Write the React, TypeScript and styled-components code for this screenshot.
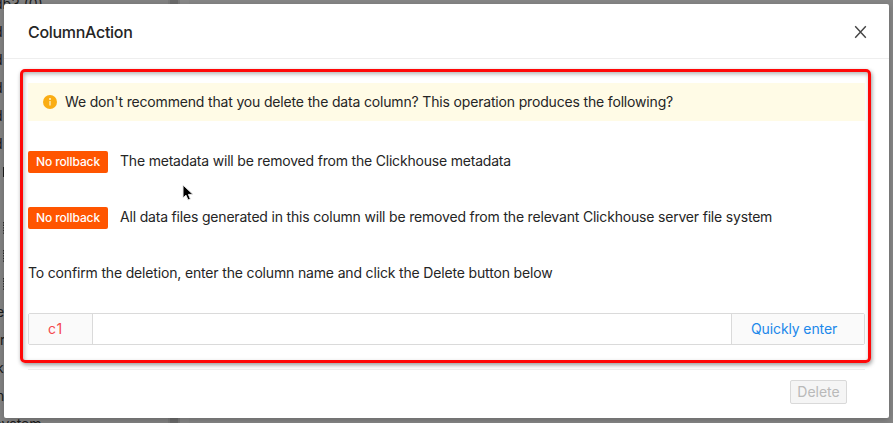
import React from "react";
import styled, { createGlobalStyle } from "styled-components";

const GlobalStyle = createGlobalStyle`
  * { box-sizing: border-box; }
  body { margin: 0; overflow: hidden; }
  button, input { font: inherit; }
`;

const Screen = styled.div`
  position: relative;
  width: 893px;
  height: 423px;
  overflow: hidden;
  font-family: Inter, "Liberation Sans", sans-serif;
  font-size: 14px;
  color: #252525;
  background: #858585;
  -webkit-font-smoothing: antialiased;
`;

const Workspace = styled.div`
  display: flex;
  height: 100%;
`;

const Sidebar = styled.div`
  width: 168px;
  flex: none;
  margin-top: -10px;
  background: #838383;
`;

const TreeRow = styled.div<{ $shift: number }>`
  height: 28px;
  line-height: 28px;
  white-space: nowrap;
  color: #1b1b1b;
  margin-left: ${(p) => p.$shift}px;
  display: flex;
  align-items: center;
`;

const Splitter = styled.div`
  width: 12px;
  border: solid #7b7b7b;
  border-width: 0 2px;
  background: #6b6b6b;
  flex: none;
`;

const Canvas = styled.div`
  flex: 1;
  border-left: 9px solid #898989;
  background: #868686;
`;

const Modal = styled.section`
  position: absolute;
  left: 4px;
  top: 4px;
  width: 885px;
  height: 414px;
  background: #fff;
  border-radius: 2px;
  box-shadow: 0 2px 7px rgba(0, 0, 0, 0.22);
`;

const Header = styled.header`
  height: 55px;
  display: flex;
  align-items: center;
  justify-content: space-between;
  padding: 2px 22px 0 24px;
  border-bottom: 1px solid #eeeeee;
`;

const Title = styled.h1`
  margin: 0;
  font-size: 16px;
  font-weight: 500;
  line-height: 22px;
  letter-spacing: -0.3px;
`;

const CloseButton = styled.button`
  display: flex;
  padding: 0;
  border: 0;
  background: none;
  color: #444;
`;

const Highlight = styled.div`
  margin: 10px 18px 0 16px;
  height: 294px;
  padding: 11px 3px 0 5px;
  border: 3px solid #ff0808;
  border-radius: 5px;
  box-shadow: 1px 2px 4px rgba(0, 0, 0, 0.4), inset 1px 2px 4px rgba(0, 0, 0, 0.3);
`;

const Banner = styled.div`
  height: 38px;
  display: flex;
  align-items: center;
  gap: 8px;
  padding-left: 15px;
  background: #fffbe6;
`;

const Line = styled.div<{ $top: number }>`
  height: 22px;
  margin-top: ${(p) => p.$top}px;
  display: flex;
  align-items: center;
  gap: 12px;
`;

const Copy = styled.span<{ $track: number }>`
  line-height: 22px;
  white-space: nowrap;
  letter-spacing: ${(p) => p.$track}px;
`;

const RowCopy = styled(Copy)`
  height: 22px;
  line-height: 20px;
`;

const Tag = styled.span`
  width: 80px;
  height: 22px;
  border-radius: 2px;
  background: #ff5500;
  color: #fff;
  font-size: 12px;
  font-weight: 500;
  line-height: 22px;
  text-align: center;
  letter-spacing: -0.1px;
`;

const InputGroup = styled.div`
  height: 32px;
  margin-top: 28px;
  display: flex;
  border: 1px solid #dadada;
  border-radius: 2px;
`;

const Addon = styled.span`
  width: 63px;
  padding-left: 19px;
  line-height: 30px;
  background: #fafafa;
  color: #f5494d;
  letter-spacing: 1px;
`;

const NameInput = styled.input`
  flex: 1;
  min-width: 0;
  border: 0;
  border-left: 1px solid #dadada;
  border-right: 1px solid #dadada;
  background: #fff;
  outline: none;
`;

const QuickButton = styled.button`
  width: 132px;
  padding: 0 0 0 19px;
  border: 0;
  background: #fafafa;
  color: #2088ea;
  text-align: left;
  line-height: 30px;
  letter-spacing: -0.12px;
`;

const Footer = styled.footer`
  margin: 6px 24px 0;
  padding: 10px 18px 0 0;
  border-top: 1px solid #eeeeee;
  display: flex;
  justify-content: flex-end;
`;

const DeleteButton = styled.button`
  width: 57px;
  height: 24px;
  padding: 0;
  border: 1px solid #d9d9d9;
  border-radius: 2px;
  background: #f5f5f5;
  color: #b9b9b9;
  line-height: 22px;
`;

const Pointer = styled.svg`
  position: absolute;
  left: 182px;
  top: 184px;
`;

const GridIcon = () => (
  <svg width="10" height="12" viewBox="0 0 10 12" stroke="#2b2b2b" strokeWidth="1.2" strokeDasharray="1.4 1.2">
    <path d="M0.6 0v12M4.6 0v12M8.6 0v12" />
  </svg>
);

const LeafIcon = () => (
  <svg width="10" height="10" viewBox="0 0 10 10" fill="none" stroke="#1b1b1b" strokeWidth="1.2">
    <rect x="0.6" y="0.6" width="8.8" height="8.8" />
  </svg>
);

const treeRows: { label: React.ReactNode; shift: number }[] = [
  { label: "db3 (0)", shift: -6 },
  { label: "d", shift: -6 },
  { label: "d", shift: -6 },
  { label: "d", shift: -6 },
  { label: "d", shift: -6 },
  { label: "d", shift: -6 },
  { label: <LeafIcon />, shift: 3 },
  { label: "", shift: 0 },
  { label: <GridIcon />, shift: 3 },
  { label: <GridIcon />, shift: 3 },
  { label: <GridIcon />, shift: 3 },
  { label: "e", shift: -4 },
  { label: "r", shift: 0 },
  { label: "k", shift: -4 },
  { label: "n", shift: -4 },
  { label: "system", shift: -6 },
];

export default function App() {
  return (
    <Screen>
      <GlobalStyle />
      <Workspace>
        <Sidebar>
          {treeRows.map((row, i) => (
            <TreeRow key={i} $shift={row.shift}>{row.label}</TreeRow>
          ))}
        </Sidebar>
        <Splitter />
        <Canvas />
      </Workspace>
      <Modal>
        <Header>
          <Title>ColumnAction</Title>
          <CloseButton aria-label="Close">
            <svg width="13" height="14" viewBox="0 0 13 14" fill="none" stroke="currentColor" strokeWidth="1.4">
              <path d="M1.2 1.2 11.8 12.8M11.8 1.2 1.2 12.8" />
            </svg>
          </CloseButton>
        </Header>
        <Highlight>
          <Banner>
            <svg width="14" height="14" viewBox="0 0 14 14">
              <circle cx="7" cy="7" r="7" fill="#faad14" />
              <circle cx="7" cy="4" r="0.9" fill="#fffbe6" />
              <path d="M7 6v4.5" stroke="#fffbe6" strokeWidth="1.1" />
            </svg>
            <Copy $track={-0.167}>We don't recommend that you delete the data column? This operation produces the following?</Copy>
          </Banner>
          <Line $top={30}>
            <Tag>No rollback</Tag>
            <RowCopy $track={-0.195}>The metadata will be removed from the Clickhouse metadata</RowCopy>
          </Line>
          <Line $top={34}>
            <Tag>No rollback</Tag>
            <RowCopy $track={-0.186}>All data files generated in this column will be removed from the relevant Clickhouse server file system</RowCopy>
          </Line>
          <Line $top={34}>
            <RowCopy $track={-0.163}>To confirm the deletion, enter the column name and click the Delete button below</RowCopy>
          </Line>
          <InputGroup>
            <Addon>c1</Addon>
            <NameInput aria-label="Column name" />
            <QuickButton>Quickly enter</QuickButton>
          </InputGroup>
        </Highlight>
        <Footer>
          <DeleteButton disabled>Delete</DeleteButton>
        </Footer>
      </Modal>
      <Pointer width="12" height="18" viewBox="0 0 12 18">
        <path d="M1 1v13l3-2.8 2 4.8 2.4-1-2-4.6H11Z" fill="#000" stroke="#e9e9e9" strokeWidth="1" />
      </Pointer>
    </Screen>
  );
}
